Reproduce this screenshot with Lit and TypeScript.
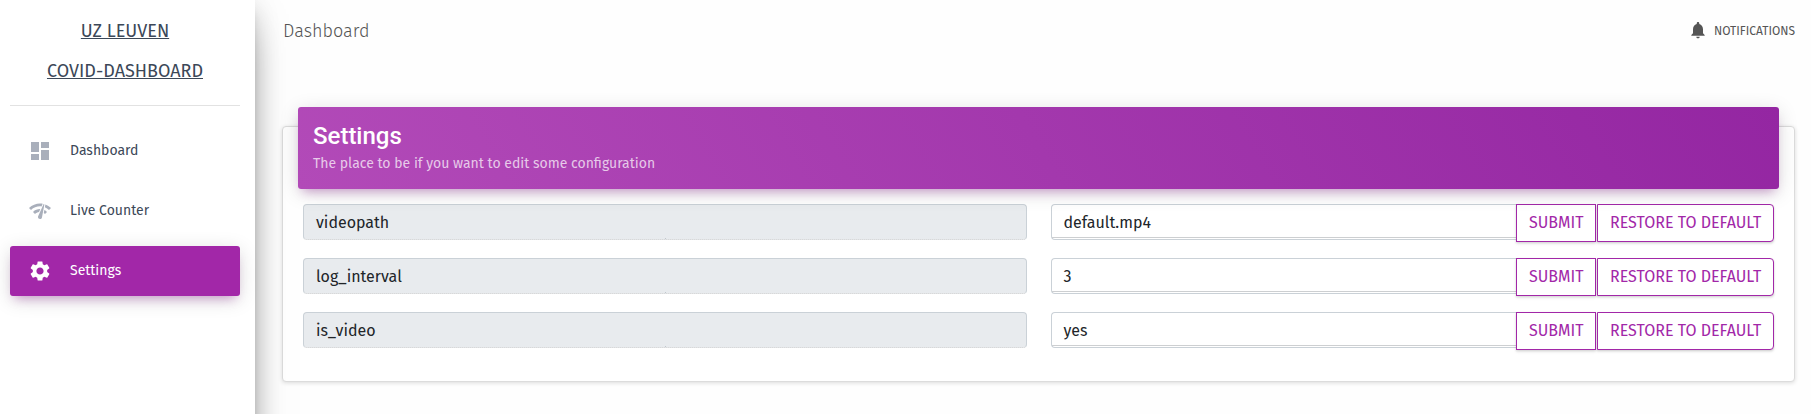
import { LitElement, html, css, svg } from "lit";
import { customElement, property } from "lit/decorators.js";

const ICONS = {
  dashboard: svg`<path d="M3 13h8V3H3v10zm0 8h8v-6H3v6zm10 0h8V11h-8v10zm0-18v6h8V3h-8z"/>`,
  counter: svg`<path d="M15.9 5c-.17 0-.32.09-.41.23l-.07.15-5.18 11.65c-.16.29-.26.61-.26.96 0 1.11.9 2.01 2.01 2.01.96 0 1.77-.68 1.96-1.59l.01-.03L16.4 5.5c0-.28-.22-.5-.5-.5zM1 9l2 2c2.88-2.88 6.79-4.08 10.53-3.62l1.19-2.68C9.89 3.84 4.74 5.27 1 9zm20 2l2-2c-1.64-1.64-3.55-2.82-5.59-3.57l-.53 2.82c1.5.62 2.9 1.53 4.12 2.75zm-4 4l2-2c-.8-.8-1.7-1.42-2.66-1.89l-.55 2.92c.42.27.83.59 1.21.97zM5 13l2 2c1.13-1.13 2.56-1.79 4.03-2l1.28-2.88c-2.63-.08-5.3.87-7.31 2.88z"/>`,
  settings: svg`<path d="M19.14 12.94c.04-.3.06-.61.06-.94 0-.32-.02-.64-.07-.94l2.03-1.58c.18-.14.23-.41.12-.61l-1.92-3.32c-.12-.22-.37-.29-.59-.22l-2.39.96c-.5-.38-1.03-.7-1.62-.94l-.36-2.54c-.04-.24-.24-.41-.48-.41h-3.84c-.24 0-.43.17-.47.41l-.36 2.54c-.59.24-1.13.57-1.62.94l-2.39-.96c-.22-.08-.47 0-.59.22L2.74 8.87c-.12.21-.08.47.12.61l2.03 1.58c-.05.3-.09.63-.09.94s.02.64.07.94l-2.03 1.58c-.18.14-.23.41-.12.61l1.92 3.32c.12.22.37.29.59.22l2.39-.96c.5.38 1.03.7 1.62.94l.36 2.54c.05.24.24.41.48.41h3.84c.24 0 .44-.17.47-.41l.36-2.54c.59-.24 1.13-.56 1.62-.94l2.39.96c.22.08.47 0 .59-.22l1.92-3.32c.12-.22.07-.47-.12-.61l-2.01-1.58zM12 15.6c-1.98 0-3.6-1.62-3.6-3.6s1.62-3.6 3.6-3.6 3.6 1.62 3.6 3.6-1.62 3.6-3.6 3.6z"/>`,
  bell: svg`<path d="M12 22c1.1 0 2-.9 2-2h-4c0 1.1.89 2 2 2zm6-6v-5c0-3.07-1.64-5.64-4.5-6.32V4c0-.83-.67-1.5-1.5-1.5s-1.5.67-1.5 1.5v.68C7.63 5.36 6 7.92 6 11v5l-2 2v1h16v-1l-2-2z"/>`,
};

type IconName = keyof typeof ICONS;

@customElement("nav-item")
class NavItem extends LitElement {
  @property() icon: IconName = "dashboard";
  @property() label = "";
  @property({ type: Boolean, reflect: true }) active = false;

  static styles = css`
    :host {
      display: flex;
      align-items: center;
      height: 50px;
      border-radius: 3px;
      color: #3c4858;
      font-size: 14px;
      line-height: 30px;
    }
    :host([active]) {
      color: #fff;
      background: #a227a8;
      box-shadow: 0 4px 20px 0 rgba(0, 0, 0, 0.14), 0 7px 10px -5px rgba(162, 39, 168, 0.4);
    }
    .icon {
      width: 24px;
      height: 24px;
      margin: 0 18px;
      fill: #a9afbb;
    }
    :host([active]) .icon {
      fill: #fff;
    }
  `;

  render() {
    return html`
      <svg class="icon" viewBox="0 0 24 24">${ICONS[this.icon]}</svg>
      <span class="label">${this.label}</span>
    `;
  }
}

@customElement("setting-row")
class SettingRow extends LitElement {
  @property() name = "";
  @property() value = "";

  static styles = css`
    :host {
      display: grid;
      grid-template-columns: 724px 723px;
      column-gap: 24px;
      height: 38px;
      align-items: start;
      font-size: 16px;
      line-height: 24px;
    }
    .field {
      box-sizing: border-box;
      height: 36px;
      padding: 6px 12px 4px;
      border: 1px solid #cad1d7;
      color: #212529;
    }
    .name {
      border-bottom: 1px dotted #d2d2d2;
      border-radius: 4px;
      background: linear-gradient(#c0c7cd, #c0c7cd) center bottom / 1px 1px no-repeat #e8ebee;
    }
    .group {
      display: flex;
    }
    .value {
      flex: 1;
      padding-left: 11.5px;
      border-right: 0;
      border-radius: 4px 0 0 4px;
      background: linear-gradient(#cdcfd1, #cdcfd1) left 0 bottom 1px / 100% 1px no-repeat #fff;
    }
    .button {
      box-sizing: border-box;
      height: 38px;
      margin: 0;
      padding: 0 0 0 12px;
      border: 1px solid #a227a8;
      background: #fff;
      color: #a227a8;
      font: inherit;
      text-align: left;
      text-transform: uppercase;
      white-space: nowrap;
      box-shadow: 0 1px 2px rgba(50, 50, 50, 0.14), 0 2px 3px rgba(0, 0, 0, 0.08);
    }
    .submit {
      width: 80px;
    }
    .restore {
      width: 177px;
      margin-left: 1px;
      border-radius: 0 4px 4px 0;
    }
  `;

  render() {
    return html`
      <div class="field name">${this.name}</div>
      <div class="group">
        <div class="field value">${this.value}</div>
        <button class="button submit">Submit</button>
        <button class="button restore">Restore to default</button>
      </div>
    `;
  }
}

@customElement("app-root")
class AppRoot extends LitElement {
  static styles = css`
    :host {
      display: flex;
      height: 414px;
      overflow: hidden;
      background: #fefefe;
      font-family: "Fira Sans", "Noto Sans", sans-serif;
    }
    .sidebar {
      box-sizing: border-box;
      flex: none;
      position: relative;
      z-index: 2;
      width: 255px;
      height: 1000px;
      padding: 16px 15px 0 10px;
      background: #fff;
      box-shadow: 0 16px 38px -12px rgba(0, 0, 0, 0.56), 0 4px 25px 0 rgba(0, 0, 0, 0.12),
        0 8px 10px -5px rgba(0, 0, 0, 0.2);
    }
    .logo {
      display: flex;
      flex-direction: column;
      align-items: center;
      gap: 10px;
      height: 89px;
      border-bottom: 1px solid #e2e2e2;
      color: #3c4858;
      font-size: 18px;
      line-height: 30px;
      text-transform: uppercase;
      text-decoration: underline;
    }
    .menu {
      display: flex;
      flex-direction: column;
      gap: 10px;
      padding-top: 20px;
    }
    .main {
      flex: 1;
      min-width: 0;
      display: flex;
      flex-direction: column;
      padding: 0 16px 0 27px;
    }
    .topbar {
      display: flex;
      justify-content: space-between;
      align-items: center;
      height: 60px;
      color: #555;
    }
    .title {
      padding: 2px 0 0 1px;
      font-size: 18px;
      font-weight: 300;
    }
    .notifications {
      display: flex;
      align-items: center;
      gap: 6px;
      font-size: 12px;
      line-height: 16px;
      text-transform: uppercase;
    }
    .caption {
      padding-top: 2px;
    }
    .bell {
      width: 20px;
      height: 20px;
      fill: #555;
    }
    .card {
      box-sizing: border-box;
      height: 256px;
      margin-top: 66px;
      padding: 0 15px;
      border: 1px solid #dcdcdc;
      border-radius: 4px;
      background: #fff;
      box-shadow: 0 1px 4px 0 rgba(0, 0, 0, 0.14);
    }
    .header {
      box-sizing: border-box;
      position: relative;
      z-index: 1;
      height: 82px;
      margin-top: -20px;
      padding: 15px;
      border-radius: 3px;
      color: #fff;
      background: linear-gradient(60deg, #b24ab8, #9426a2);
      box-shadow: 0 4px 20px 0 rgba(0, 0, 0, 0.14), 0 7px 10px -5px rgba(162, 39, 168, 0.4);
    }
    .heading {
      margin: 0;
      font: 500 24px/28px Roboto, sans-serif;
    }
    .subtitle {
      margin: 0;
      padding-top: 3px;
      color: rgba(255, 255, 255, 0.72);
      font-size: 14px;
      line-height: 21px;
    }
    .rows {
      display: flex;
      flex-direction: column;
      gap: 16px;
      padding: 15px 5px 0;
    }
  `;

  render() {
    return html`
      <aside class="sidebar">
        <div class="logo">
          <span class="line">UZ Leuven</span>
          <span class="line">Covid-Dashboard</span>
        </div>
        <nav class="menu">
          <nav-item icon="dashboard" label="Dashboard"></nav-item>
          <nav-item icon="counter" label="Live Counter"></nav-item>
          <nav-item icon="settings" label="Settings" active></nav-item>
        </nav>
      </aside>
      <main class="main">
        <header class="topbar">
          <span class="title">Dashboard</span>
          <span class="notifications">
            <svg class="bell" viewBox="0 0 24 24">${ICONS.bell}</svg>
            <span class="caption">Notifications</span>
          </span>
        </header>
        <section class="card">
          <div class="header">
            <h4 class="heading">Settings</h4>
            <p class="subtitle">The place to be if you want to edit some configuration</p>
          </div>
          <div class="rows">
            <setting-row name="videopath" value="default.mp4"></setting-row>
            <setting-row name="log_interval" value="3"></setting-row>
            <setting-row name="is_video" value="yes"></setting-row>
          </div>
        </section>
      </main>
    `;
  }
}
